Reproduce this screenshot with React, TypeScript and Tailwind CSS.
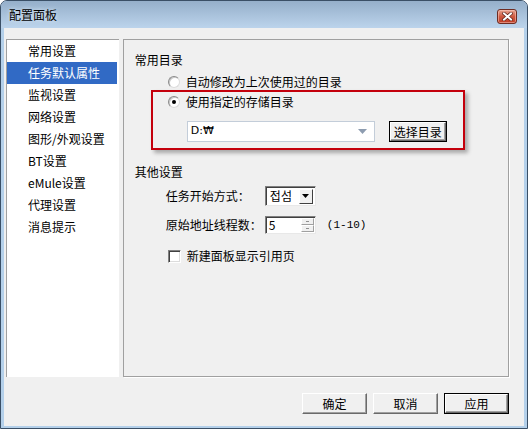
import React from 'react'

const navItems = ['常用设置', '任务默认属性', '监视设置', '网络设置', '图形/外观设置', 'BT设置', 'eMule设置', '代理设置', '消息提示']

function Radio({ checked }: { checked?: boolean }) {
  return (
    <span className="w-[12px] h-[12px] rounded-full border border-t-[#8a8a8a] border-l-[#8a8a8a] border-r-[#dcdcdc] border-b-[#dcdcdc] bg-white shadow-[inset_1px_1px_0_#c8c8c8] flex items-center justify-center shrink-0">
      {checked && <span className="w-[4px] h-[4px] rounded-full bg-black" />}
    </span>
  )
}

function Btn({ label, isDefault, w = 'w-[65px]' }: { label: string; isDefault?: boolean; w?: string }) {
  return (
    <div className={`${w} h-[21px] ${isDefault ? 'border border-black' : ''} flex`}>
      <div className="flex-1 flex items-center justify-center bg-[#f0f0f0] border border-t-white border-l-white border-r-[#6a6a6a] border-b-[#6a6a6a] shadow-[inset_-1px_-1px_0_#a0a0a0]">
        <span className="leading-none">{label}</span>
      </div>
    </div>
  )
}

export default function App() {
  return (
    <div className="w-[528px] h-[429px] flex flex-col rounded-t-[7px] border border-[#3a4f66] bg-[#b4d0ea] overflow-hidden text-[12px] text-black font-['Noto_Sans_CJK_SC','Noto_Sans_CJK_KR',sans-serif]">
      {/* title bar */}
      <div className="h-[27px] shrink-0 flex items-center justify-between pl-[8px] pr-[10px] bg-gradient-to-b from-[#95afca] to-[#bcd4ec]">
        <span className="leading-none [text-shadow:0_0_4px_#e6f0fa]">配置面板</span>
        <div className="w-[20px] h-[15px] mt-[3px] rounded-[3px] border border-[#6e2c22] bg-gradient-to-b from-[#e7a593] via-[#cf5940] to-[#bd3a24] flex items-center justify-center shadow-[inset_0_0_0_1px_rgba(255,210,200,0.5)]">
          <svg width="11" height="9" viewBox="0 0 11 9">
            <path d="M2 1.5 L9 7.5 M9 1.5 L2 7.5" stroke="#5a2018" strokeWidth="3.4" strokeLinecap="square" />
            <path d="M2 1.5 L9 7.5 M9 1.5 L2 7.5" stroke="#ffffff" strokeWidth="2" strokeLinecap="square" />
          </svg>
        </div>
      </div>

      {/* client area */}
      <div className="flex-1 flex flex-col mx-[3px] mb-[2px] bg-[#f0f0f0] pt-[11px] pl-[2px] pr-[15px]">
        <div className="flex gap-[4px] h-[338px]">
          {/* nav list */}
          <div className="w-[114px] h-full bg-white border-l border-t border-[#a0a0a0] flex flex-col">
            {navItems.map((item, i) => (
              <div
                key={item}
                className={`h-[22px] shrink-0 flex items-center pl-[21px] mr-[2px] ${i === 1 ? 'bg-[#316ac5] text-white' : ''}`}
              >
                {item}
              </div>
            ))}
          </div>

          {/* settings panel */}
          <div className="w-[390px] h-full border border-[#a0a0a0] shadow-[1px_1px_0_#fff] flex flex-col pl-[11px]">
            <div className="h-[14px] mt-[13px] flex items-center">常用目录</div>

            <div className="h-[14px] mt-[8px] ml-[33px] flex items-center gap-[6px]">
              <Radio />
              <span>自动修改为上次使用过的目录</span>
            </div>

            {/* highlighted box */}
            <div className="w-[314px] h-[60px] mt-[1px] ml-[16px] border-2 border-[#c4000c] shadow-[3px_3px_4px_rgba(0,0,0,0.3)] flex flex-col">
              <div className="h-[14px] mt-[3px] pl-[15px] flex items-center gap-[6px]">
                <Radio checked />
                <span>使用指定的存储目录</span>
              </div>
              <div className="h-[21px] mt-[12px] pl-[34px] flex items-center gap-[14px]">
                <div className="w-[188px] h-[21px] bg-white border border-[#c3cdd9] flex items-center justify-between pl-[3px] pr-[7px]">
                  <span className="font-['DejaVu_Sans',sans-serif] text-[11px]">D:₩</span>
                  <svg width="9" height="5" viewBox="0 0 9 5">
                    <path d="M0 0 H9 L4.5 5 Z" fill="#8d9cb0" />
                  </svg>
                </div>
                <Btn label="选择目录" isDefault w="w-[58px]" />
              </div>
            </div>

            <div className="h-[14px] mt-[15px] flex items-center">其他设置</div>

            <div className="h-[20px] mt-[7px] ml-[31px] flex items-center">
              <span className="w-[99px]">任务开始方式：</span>
              <div className="w-[51px] h-[20px] bg-white border border-t-[#808080] border-l-[#808080] border-r-[#e8e8e8] border-b-[#e8e8e8] shadow-[inset_1px_1px_0_#404040] flex items-center justify-between pl-[4px] pr-[2px]">
                <span className="font-['Noto_Sans_CJK_KR',sans-serif]">접섬</span>
                <div className="w-[14px] h-[15px] bg-[#f0f0f0] border border-t-white border-l-white border-r-[#404040] border-b-[#404040] flex items-center justify-center">
                  <svg width="7" height="4" viewBox="0 0 7 4">
                    <path d="M0 0 H7 L3.5 4 Z" fill="#000" />
                  </svg>
                </div>
              </div>
            </div>

            <div className="h-[18px] mt-[10px] ml-[31px] flex items-center">
              <span className="w-[99px]">原始地址线程数：</span>
              <div className="w-[51px] h-[18px] bg-white border border-t-[#808080] border-l-[#808080] border-r-[#e8e8e8] border-b-[#e8e8e8] shadow-[inset_1px_1px_0_#404040] flex items-center justify-between pl-[3px] pr-[1px]">
                <span>5</span>
                <div className="w-[13px] h-[14px] flex flex-col">
                  <div className="flex-1 bg-[#f0f0f0] border border-t-white border-l-white border-r-[#a0a0a0] border-b-[#a0a0a0] flex items-center justify-center">
                    <span className="w-[3px] h-px bg-[#909090]" />
                  </div>
                  <div className="flex-1 bg-[#f0f0f0] border border-t-white border-l-white border-r-[#a0a0a0] border-b-[#a0a0a0] flex items-center justify-center">
                    <span className="w-[3px] h-px bg-[#909090]" />
                  </div>
                </div>
              </div>
              <span className="ml-[11px] font-['Liberation_Mono',monospace] text-[11px]">(1-10)</span>
            </div>

            <div className="h-[14px] mt-[15px] ml-[33px] flex items-center gap-[6px]">
              <span className="w-[13px] h-[13px] bg-white border border-t-[#808080] border-l-[#808080] border-r-white border-b-white shadow-[inset_1px_1px_0_#404040,inset_-1px_-1px_0_#dcdcdc] shrink-0" />
              <span>新建面板显示引用页</span>
            </div>
          </div>
        </div>

        {/* dialog buttons */}
        <div className="h-[21px] mt-[16px] flex justify-end gap-[6px]">
          <Btn label="确定" />
          <Btn label="取消" />
          <Btn label="应用" isDefault />
        </div>
      </div>
    </div>
  )
}
